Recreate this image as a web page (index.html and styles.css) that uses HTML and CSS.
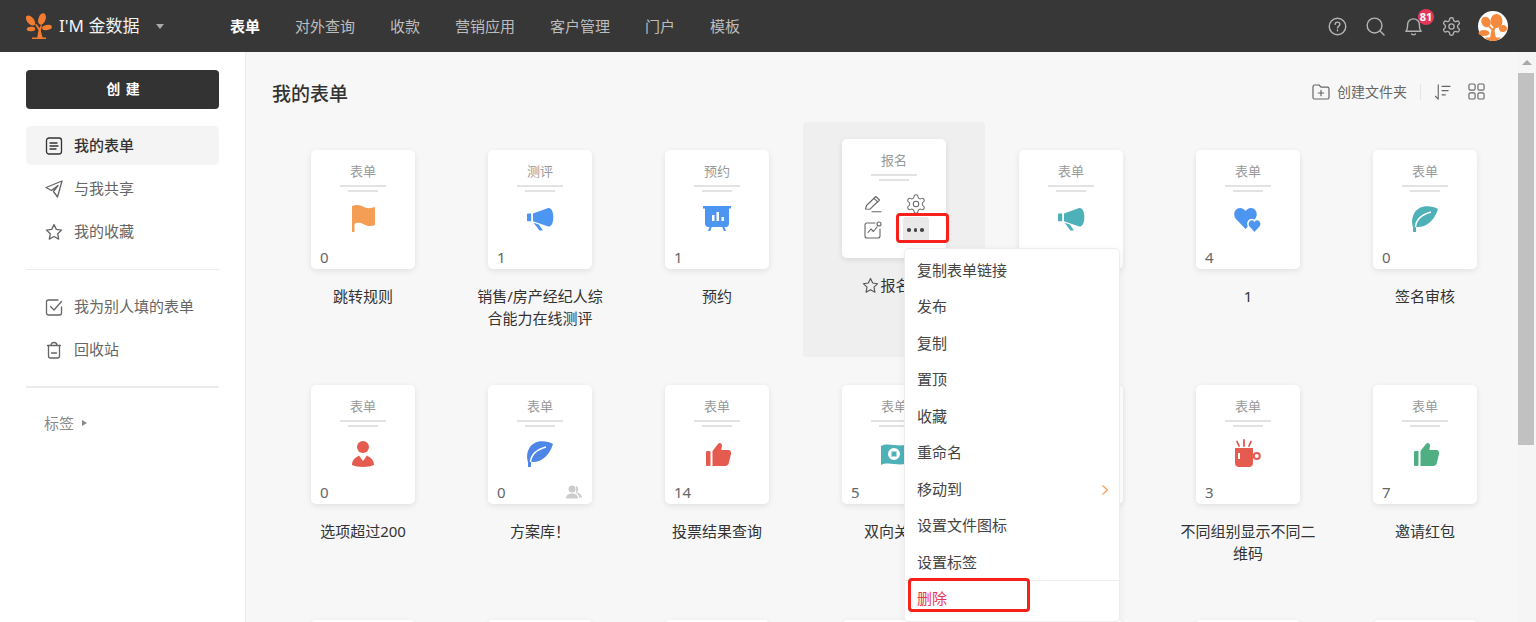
FILE: index.html
```html
<!DOCTYPE html>
<html lang="zh-CN">
<head>
<meta charset="utf-8">
<title>我的表单 - 金数据</title>
<link rel="stylesheet" href="styles.css">
</head>
<body>
<svg class="sprite" aria-hidden="true">
  <symbol id="i-flag" viewBox="0 0 28 28"><path d="M3 2C8 0 11 1 15 3S22 4 26 3V21C21 23 18 22 14 20S7 19 5.5 20V28H3Z"/></symbol>
  <symbol id="i-horn" viewBox="0 0 28 28"><path d="M7 9.5 21.500 4.200C25 3 27.300 7 27.300 13.200S25 23.500 21.500 22.300L7 17.200Z"/><path d="M2 9.500H5.200V17.200H2C1.400 17.200 1 16.800 1 16.200V10.500C1 9.900 1.400 9.500 2 9.500Z"/><path d="M7.500 18.800 12.800 20.500 17 26.500H13.500Z"/></symbol>
  <symbol id="i-board" viewBox="0 0 28 28"><path fill-rule="evenodd" d="M0 2H28V4.500H26V19C26 21.500 25 23 23 23H21.500L23 27H20.800L19.300 23H8.700L7.200 27H5L6.500 23H5C3 23 2 21.500 2 19V4.500H0ZM9 11V17H11.500V11ZM13.500 8V17H16V8ZM18.500 13V17H21V13Z"/></symbol>
  <symbol id="i-heart" viewBox="0 0 28 28"><path d="M11.500 25 2 15C-1.500 11 .5 4 6 4 8.500 4 10.500 5.500 11.500 7 12.500 5.500 14.500 4 17 4 22.500 4 24.500 11 21 15Z"/><path class="knock" d="M20.500 29 15 23C12.500 20 14.500 15.500 18 15.500 19 15.500 20 16 20.500 16.800 21 16 22 15.500 23 15.500 26.500 15.500 28.500 20 26 23Z"/></symbol>
  <symbol id="i-leaf" viewBox="0 0 28 28"><path d="M27 5C20 1 9 1 4 8 0 14 1 20 2 23V28H5V23C14 24 23 18 27 5Z"/><path class="vein" d="M4.500 23C5 16 11 10.500 20 8"/></symbol>
  <symbol id="i-person" viewBox="0 0 28 28"><circle cx="14" cy="8" r="6"/><path d="M3 26C3 21 6 19 10 16.500L14 22 18 16.500C22 19 25 21 25 26 20 28.500 8 28.500 3 26Z"/></symbol>
  <symbol id="i-thumb" viewBox="0 0 28 28"><rect x="3" y="12" width="4.500" height="15" rx="1.200"/><path d="M9.500 12 15 5C16.300 3 19.300 4 19 7L18.300 11H25.500C27.500 11 28.500 13 28 15L25.700 24.500C25.200 26 24 27 22.300 27H9.500Z"/></symbol>
  <symbol id="i-money" viewBox="0 0 28 28"><path fill-rule="evenodd" d="M1 7C8 3 20 9 27 5V24C20 28 8 22 1 26ZM14 9A6 6 0 1 0 14 21 6 6 0 0 0 14 9ZM11.500 12.500H16.500V17.500H11.500Z"/></symbol>
  <symbol id="i-cup" viewBox="0 0 28 28"><path fill-rule="evenodd" d="M1 9H19V24C19 26.500 17.500 28 15 28H5C2.500 28 1 26.500 1 24ZM4 14V20H6V14Z"/><circle class="ring" cx="22.800" cy="17" r="3"/><path class="steam" d="M3 2.500 5 7M10 1V7M17 2.500 15 7"/></symbol>
  <symbol id="i-people" viewBox="0 0 16 14"><circle cx="6" cy="4" r="3.500"/><path d="M0 13.500C0 10 2.500 8.500 6 8.500S12 10 12 13.500Z"/><path d="M9.500.8A3.500 3.500 0 0 1 10.500 7.300C13.500 8 16 10 16 12.500H13C13 10 11.500 8.500 9.500 7.800 10.500 5.500 10.500 3 9.500.8Z"/></symbol>
  <symbol id="i-gear" viewBox="0 0 24 24"><path d="M12.220 2h-.44a2 2 0 0 0-2 2v.18a2 2 0 0 1-1 1.730l-.43.250a2 2 0 0 1-2 0l-.15-.08a2 2 0 0 0-2.730.730l-.22.380a2 2 0 0 0 .730 2.730l.15.100a2 2 0 0 1 1 1.720v.510a2 2 0 0 1-1 1.740l-.15.090a2 2 0 0 0-.730 2.730l.22.380a2 2 0 0 0 2.730.730l.15-.08a2 2 0 0 1 2 0l.43.250a2 2 0 0 1 1 1.730V20a2 2 0 0 0 2 2h.44a2 2 0 0 0 2-2v-.18a2 2 0 0 1 1-1.730l.43-.25a2 2 0 0 1 2 0l.15.080a2 2 0 0 0 2.730-.730l.22-.390a2 2 0 0 0-.730-2.730l-.15-.08a2 2 0 0 1-1-1.740v-.5a2 2 0 0 1 1-1.740l.15-.09a2 2 0 0 0 .730-2.730l-.22-.38a2 2 0 0 0-2.730-.730l-.15.080a2 2 0 0 1-2 0l-.43-.25a2 2 0 0 1-1-1.730V4a2 2 0 0 0-2-2z"/><circle cx="12" cy="12" r="3"/></symbol>
  <symbol id="i-star" viewBox="0 0 18 18"><path d="M9 1.500 11.300 6.400 16.600 7.100 12.700 10.800 13.700 16.100 9 13.500 4.300 16.100 5.300 10.800 1.400 7.100 6.700 6.400Z"/></symbol>
</svg>

<header class="topbar">
  <div class="brand">
    <svg class="brand-logo" viewBox="0 0 26 26">
      <ellipse cx="4.500" cy="7.500" rx="3.400" ry="6" transform="rotate(-40 4.500 7.500)"/>
      <ellipse cx="16" cy="6" rx="3.600" ry="6" transform="rotate(18 16 6)"/>
      <ellipse cx="5" cy="16" rx="4.300" ry="2.300" transform="rotate(-5 5 16)"/>
      <ellipse cx="21" cy="14.500" rx="5" ry="2.500" transform="rotate(-12 21 14.500)"/>
      <path d="M11 26 12.500 17 9 11.500 10.500 11 13.500 15 15 12 16 12.500 14.800 18 17 26Z"/>
      <path d="M6 24.500H20V26H6Z"/>
    </svg>
    <span class="brand-name">I'M 金数据</span>
    <span class="brand-caret"></span>
  </div>
  <nav class="nav">
    <a class="nav-link is-active">表单</a>
    <a class="nav-link">对外查询</a>
    <a class="nav-link">收款</a>
    <a class="nav-link">营销应用</a>
    <a class="nav-link">客户管理</a>
    <a class="nav-link">门户</a>
    <a class="nav-link">模板</a>
  </nav>
  <div class="top-tools">
    <span class="tool"><svg class="tool-icon" viewBox="0 0 20 20"><circle cx="10" cy="10" r="8.700"/><path d="M7.500 7.800C7.500 6.300 8.700 5.400 10 5.400S12.500 6.300 12.500 7.700C12.500 9.500 10 9.600 10 11.500"/><path d="M10 13.700V14.600"/></svg></span>
    <span class="tool"><svg class="tool-icon" viewBox="0 0 20 20"><circle cx="9" cy="9" r="7.800"/><path d="M14.800 14.800 19 19"/></svg></span>
    <span class="tool tool-bell"><svg class="tool-icon" viewBox="0 0 20 20"><path d="M2 15C3.500 13.500 3.800 12 3.800 9V7.800C3.800 4.500 6.500 2 10 2S16.200 4.500 16.200 7.800V9C16.200 12 16.500 13.500 18 15Z"/><path d="M8 17.800C9 18.800 11 18.800 12 17.800"/></svg><span class="badge">81</span></span>
    <span class="tool"><svg class="tool-icon tool-gear"><use href="#i-gear"/></svg></span>
    <svg class="avatar" viewBox="0 0 30 30">
      <circle class="avatar-bg" cx="15" cy="15" r="15"/>
      <ellipse cx="8" cy="11" rx="4.500" ry="5.500" transform="rotate(-30 8 11)"/>
      <ellipse cx="18.500" cy="10" rx="6" ry="7"/>
      <ellipse cx="6" cy="22" rx="5.500" ry="3"/>
      <ellipse cx="25" cy="17.500" rx="4" ry="3.500" transform="rotate(-15 25 17.500)"/>
      <path d="M12 27 13.500 19 10 15.500 11.500 14.500 14.500 17.500 17 15 18 16 16.500 20 18 27Z"/>
      <path d="M7 26.500H23C21 29 18 30 15 30S9 29 7 26.500Z"/>
    </svg>
  </div>
</header>

<div class="layout">
  <aside class="sidebar">
    <button class="create-btn">创 建</button>
    <ul class="side-list">
      <li class="side-item is-active"><svg class="side-icon" viewBox="0 0 18 18"><rect x="1.500" y="1" width="15" height="16" rx="2.500"/><path d="M5 6H12M5 9H13M5 12H11"/></svg>我的表单</li>
      <li class="side-item"><svg class="side-icon" viewBox="0 0 18 18"><path d="M17 1 1 7.500 6.500 10.500 13 5.500 8.500 11.500 12.500 17Z"/></svg>与我共享</li>
      <li class="side-item"><svg class="side-icon" viewBox="0 0 18 18"><use href="#i-star"/></svg>我的收藏</li>
    </ul>
    <hr class="side-rule">
    <ul class="side-list">
      <li class="side-item"><svg class="side-icon" viewBox="0 0 18 18"><path d="M16.500 9V15C16.500 16 15.800 17 14.500 17H3.500C2.300 17 1.500 16.200 1.500 15V4C1.500 2.800 2.300 2 3.500 2H13"/><path d="M5.500 8.500 9 12 16.500 3.500"/></svg>我为别人填的表单</li>
      <li class="side-item"><svg class="side-icon" viewBox="0 0 18 18"><path d="M2.500 4.500H15.500M6 4.500C6 2.500 7 1.500 9 1.500S12 2.500 12 4.500"/><path d="M3.500 4.500V15C3.500 16.200 4.300 17 5.500 17H12.500C13.700 17 14.500 16.200 14.500 15V4.500"/><path d="M6.500 12H11.500"/></svg>回收站</li>
    </ul>
    <hr class="side-rule side-rule-thick">
    <div class="side-tags">标签<span class="tags-caret"></span></div>
  </aside>

  <main class="main">
    <div class="toolbar">
      <h1 class="page-title">我的表单</h1>
      <div class="toolbar-tools">
        <svg class="tb-icon" viewBox="0 0 18 18"><path d="M1 4C1 2.800 1.600 2 2.800 2H7L9 4.200H15.500C16.500 4.200 17 5 17 6V14.500C17 15.500 16.500 16 15.500 16H2.500C1.500 16 1 15.500 1 14.500Z"/><path d="M9 7.300V12.700M6.300 10H11.700"/></svg>
        <span class="tb-label">创建文件夹</span>
        <span class="tb-divider"></span>
        <svg class="tb-icon tb-sort" viewBox="0 0 18 18"><path d="M4.500 1.500V16.500M4.500 16.500 1.500 13.500"/><path d="M8.500 3H17M8.500 7.500H15M8.500 12H12"/></svg>
        <svg class="tb-icon tb-grid" viewBox="0 0 18 18"><rect x="1" y="1" width="6.500" height="6.500" rx="1.500"/><rect x="10.500" y="1" width="6.500" height="6.500" rx="1.500"/><rect x="1" y="10.500" width="6.500" height="6.500" rx="1.500"/><rect x="10.500" y="10.500" width="6.500" height="6.500" rx="1.500"/></svg>
      </div>
    </div>

    <div class="form-grid">
      <article class="cell"><div class="card"><div class="card-type">表单</div><i class="rule"></i><i class="rule rule-short"></i><svg class="card-icon c-orange"><use href="#i-flag"/></svg><div class="card-foot"><span class="count">0</span></div></div><div class="cell-title">跳转规则</div></article>
      <article class="cell"><div class="card"><div class="card-type">测评</div><i class="rule"></i><i class="rule rule-short"></i><svg class="card-icon c-blue"><use href="#i-horn"/></svg><div class="card-foot"><span class="count">1</span></div></div><div class="cell-title">销售/房产经纪人综合能力在线测评</div></article>
      <article class="cell"><div class="card"><div class="card-type">预约</div><i class="rule"></i><i class="rule rule-short"></i><svg class="card-icon c-blue"><use href="#i-board"/></svg><div class="card-foot"><span class="count">1</span></div></div><div class="cell-title">预约</div></article>
      <article class="cell is-hover">
        <div class="card">
          <div class="card-type">报名</div><i class="rule"></i><i class="rule rule-short"></i>
          <div class="card-actions">
            <span class="action"><svg class="action-icon" viewBox="0 0 18 18"><path d="M1.500 14 2.500 10.500 11.800 1.500 15.500 5 6 14.200Z"/><path d="M10 3.300 13.700 6.900M8 16.800H17"/></svg></span>
            <span class="action"><svg class="action-icon action-gear"><use href="#i-gear"/></svg></span>
            <span class="action"><svg class="action-icon" viewBox="0 0 18 18"><path d="M11 2H3C1.800 2 1 2.800 1 4V15C1 16.200 1.800 17 3 17H14C15.200 17 16 16.200 16 15V8"/><path d="M4 11.500 7 8 9.500 10.500 13 6"/><circle cx="15" cy="3" r="2"/></svg></span>
            <span class="action action-more"><i></i><i></i><i></i></span>
          </div>
        </div>
        <div class="cell-title"><svg class="title-star" viewBox="0 0 18 18"><use href="#i-star"/></svg>报名表</div>
      </article>
      <article class="cell"><div class="card"><div class="card-type">表单</div><i class="rule"></i><i class="rule rule-short"></i><svg class="card-icon c-teal"><use href="#i-horn"/></svg><div class="card-foot"><span class="count">2</span></div></div><div class="cell-title">活动</div></article>
      <article class="cell"><div class="card"><div class="card-type">表单</div><i class="rule"></i><i class="rule rule-short"></i><svg class="card-icon c-blue"><use href="#i-heart"/></svg><div class="card-foot"><span class="count">4</span></div></div><div class="cell-title">1</div></article>
      <article class="cell"><div class="card"><div class="card-type">表单</div><i class="rule"></i><i class="rule rule-short"></i><svg class="card-icon c-teal"><use href="#i-leaf"/></svg><div class="card-foot"><span class="count">0</span></div></div><div class="cell-title">签名审核</div></article>

      <article class="cell"><div class="card"><div class="card-type">表单</div><i class="rule"></i><i class="rule rule-short"></i><svg class="card-icon c-red"><use href="#i-person"/></svg><div class="card-foot"><span class="count">0</span></div></div><div class="cell-title">选项超过200</div></article>
      <article class="cell"><div class="card"><div class="card-type">表单</div><i class="rule"></i><i class="rule rule-short"></i><svg class="card-icon c-indigo"><use href="#i-leaf"/></svg><div class="card-foot"><span class="count">0</span><svg class="share-icon"><use href="#i-people"/></svg></div></div><div class="cell-title">方案库！</div></article>
      <article class="cell"><div class="card"><div class="card-type">表单</div><i class="rule"></i><i class="rule rule-short"></i><svg class="card-icon c-red"><use href="#i-thumb"/></svg><div class="card-foot"><span class="count">14</span></div></div><div class="cell-title">投票结果查询</div></article>
      <article class="cell"><div class="card"><div class="card-type">表单</div><i class="rule"></i><i class="rule rule-short"></i><svg class="card-icon c-teal"><use href="#i-money"/></svg><div class="card-foot"><span class="count">5</span></div></div><div class="cell-title">双向关联</div></article>
      <article class="cell"><div class="card"><div class="card-type">表单</div><i class="rule"></i><i class="rule rule-short"></i><svg class="card-icon c-blue"><use href="#i-flag"/></svg><div class="card-foot"><span class="count">0</span></div></div><div class="cell-title">问卷</div></article>
      <article class="cell"><div class="card"><div class="card-type">表单</div><i class="rule"></i><i class="rule rule-short"></i><svg class="card-icon c-red"><use href="#i-cup"/></svg><div class="card-foot"><span class="count">3</span></div></div><div class="cell-title">不同组别显示不同二维码</div></article>
      <article class="cell"><div class="card"><div class="card-type">表单</div><i class="rule"></i><i class="rule rule-short"></i><svg class="card-icon c-green"><use href="#i-thumb"/></svg><div class="card-foot"><span class="count">7</span></div></div><div class="cell-title">邀请红包</div></article>

      <article class="cell"><div class="card"></div></article>
      <article class="cell"><div class="card"></div></article>
      <article class="cell"><div class="card"></div></article>
      <article class="cell"><div class="card"></div></article>
      <article class="cell"><div class="card"></div></article>
      <article class="cell"><div class="card"></div></article>
      <article class="cell"><div class="card"></div></article>
    </div>
  </main>

  <div class="scrollbar">
    <span class="scroll-up"></span>
    <span class="scroll-thumb"></span>
  </div>
</div>

<ul class="context-menu">
  <li class="menu-item">复制表单链接</li>
  <li class="menu-item">发布</li>
  <li class="menu-item">复制</li>
  <li class="menu-item">置顶</li>
  <li class="menu-item">收藏</li>
  <li class="menu-item">重命名</li>
  <li class="menu-item menu-sub">移动到<svg class="menu-chevron" viewBox="0 0 8 12"><path d="M1.500 1.500 6.500 6 1.500 10.500"/></svg></li>
  <li class="menu-item">设置文件图标</li>
  <li class="menu-item">设置标签</li>
  <li class="menu-item menu-danger">删除</li>
</ul>
<div class="mark mark-more"></div>
<div class="mark mark-delete"></div>
</body>
</html>
```

FILE: styles.css
```css
* { box-sizing: border-box; }
html, body { margin: 0; height: 622px; overflow: hidden; }
body {
  position: relative;
  font-family: "Noto Sans", "Noto Sans CJK SC", sans-serif;
  font-size: 15px;
  color: #333;
  background: #f7f7f7;
}
ul { margin: 0; padding: 0; list-style: none; }
.sprite { position: absolute; width: 0; height: 0; }

/* top bar */
.topbar {
  height: 52px;
  background: #373737;
  display: flex;
  align-items: center;
  padding-left: 26px;
}
.brand { width: 204px; display: flex; align-items: center; }
.brand-logo { width: 26px; height: 26px; fill: #f47c30; flex: none; }
.brand-name { margin-left: 7px; font-size: 17px; line-height: 24px; color: #f2f2f2; white-space: nowrap; }
.brand-caret {
  margin-left: 17px;
  width: 0; height: 0;
  border-left: 4.500px solid transparent;
  border-right: 4.500px solid transparent;
  border-top: 5px solid #aaa;
}
.nav { display: flex; gap: 35px; }
.nav-link { font-size: 15px; line-height: 22px; color: #bdbdbd; white-space: nowrap; }
.nav-link.is-active { color: #fff; font-weight: 700; }
.top-tools { margin-left: auto; margin-right: 28px; display: flex; align-items: center; }
.tool { position: relative; width: 38px; height: 30px; display: flex; align-items: center; justify-content: center; }
.tool-icon { width: 19px; height: 19px; fill: none; stroke: #b4b4b4; stroke-width: 1.500; stroke-linecap: round; stroke-linejoin: round; }
.tool-gear { width: 21px; height: 21px; }
.badge {
  position: absolute; left: 24px; top: -2px;
  width: 16px; height: 16px; border-radius: 50%;
  background: #e6375a; color: #fff;
  font-size: 11px; line-height: 16px; font-weight: 700; text-align: center;
}
.avatar { width: 30px; height: 30px; margin-left: 8px; fill: #f58a3c; }
.avatar-bg { fill: #fff; }

/* layout */
.layout { display: flex; height: 570px; }

/* sidebar */
.sidebar {
  width: 246px; flex: none;
  background: #fff;
  border-right: 1px solid #ececec;
  padding: 18px 26px 0;
}
.create-btn {
  display: block; width: 193px; height: 39px;
  margin: 0 0 17px; padding: 0 0 2px 2px;
  border: 0; border-radius: 4px;
  background: #333; color: #fff;
  font: 700 14px/37px "Noto Sans", "Noto Sans CJK SC", sans-serif;
  letter-spacing: 1px;
}
.side-list { display: flex; flex-direction: column; gap: 4px; }
.side-item {
  width: 193px; height: 39px;
  display: flex; align-items: center;
  padding: 0 0 2px 19px;
  border-radius: 5px;
  font-size: 15px; color: #666;
  white-space: nowrap;
}
.side-item.is-active { background: #f4f4f4; color: #333; font-weight: 500; }
.side-icon { width: 18px; height: 18px; margin: 2px 11px 0 0; flex: none; fill: none; stroke: #666; stroke-width: 1.300; stroke-linejoin: round; stroke-linecap: round; }
.is-active .side-icon { stroke: #333; }
.side-rule { margin: 18px 0 17px; border: 0; border-top: 1px solid #ececec; width: 193px; }
.side-rule-thick { border-top-width: 2px; margin: 17px 0 24px; }
.side-tags { padding-left: 18px; font-size: 15px; line-height: 22px; color: #8a8a8a; display: flex; align-items: center; }
.tags-caret {
  margin-left: 8px; width: 0; height: 0;
  border-top: 3.500px solid transparent;
  border-bottom: 3.500px solid transparent;
  border-left: 5px solid #888;
}

/* main */
.main { flex: 1; min-width: 0; padding-left: 28px; overflow: hidden; background: #f7f7f7; }
.toolbar { height: 70px; padding: 11px 33px 0 0; display: flex; align-items: center; justify-content: space-between; }
.page-title { margin: 2px 0 0 -2px; font-size: 19px; line-height: 28px; font-weight: 500; color: #333; }
.toolbar-tools { display: flex; align-items: center; margin-bottom: 2px; }
.tb-icon { width: 18px; height: 18px; fill: none; stroke: #666; stroke-width: 1.200; stroke-linecap: round; stroke-linejoin: round; }
.tb-label { margin-left: 7px; font-size: 14px; line-height: 20px; color: #666; }
.tb-divider { width: 1px; height: 16px; margin: 0 13px 0 13px; background: #e4e4e4; }
.tb-sort { width: 17px; }
.tb-grid { margin-left: 17px; width: 17px; height: 17px; }

.form-grid { display: grid; grid-template-columns: repeat(7, 177px); grid-auto-rows: 235px; margin-left: .500px; }
.cell { display: flex; flex-direction: column; align-items: center; padding-top: 28px; }
.card {
  width: 104px; height: 119px; flex: none;
  display: flex; flex-direction: column; align-items: center;
  padding-top: 12px;
  background: #fff; border-radius: 5px;
  box-shadow: 0 2px 6px rgba(0, 0, 0, .09);
}
.card-type { font-size: 13px; line-height: 18px; color: #999; }
.rule { display: block; width: 46px; height: 2px; margin-top: 5px; background: #e2e2e2; flex: none; }
.rule-short { width: 30px; margin-top: 3px; }
.card-icon { width: 28px; height: 28px; margin-top: 12px; flex: none; }
.card-foot { margin-top: auto; width: 100%; height: 21px; padding: 0 10px 3px 9px; display: flex; align-items: center; justify-content: space-between; }
.count { font-size: 15px; line-height: 18px; color: #666; }
.share-icon { width: 16px; height: 14px; fill: #ccc; }
.c-orange { fill: #f49d55; }
.c-blue { fill: #4c96f2; }
.c-teal { fill: #4fb1b8; }
.c-red { fill: #e55b50; }
.c-green { fill: #4faf82; }
.c-indigo { fill: #4d86e6; }
.vein { fill: none; stroke: #fff; stroke-width: 1.500; }
.knock { stroke: #fff; stroke-width: 1.500; }
.ring { fill: none; stroke: #e55b50; stroke-width: 2; }
.steam { fill: none; stroke: #e55b50; stroke-width: 1.800; stroke-linecap: round; }
.cell-title {
  width: 140px; margin-top: 16px;
  font-size: 15px; line-height: 22px; color: #333;
  text-align: center;
}
.is-hover { margin: 0 -2.500px; padding-top: 17px; background: #efefef; border-radius: 4px; }
.is-hover .cell-title { display: flex; justify-content: center; align-items: center; white-space: nowrap; }
.title-star { width: 17px; height: 17px; margin-right: 1px; fill: none; stroke: #555; stroke-width: 1.200; stroke-linejoin: round; }

.card-actions { display: grid; grid-template-columns: 26px 26px; grid-auto-rows: 26px; column-gap: 17px; margin-top: 10px; }
.action { display: flex; align-items: center; justify-content: center; }
.action-icon { width: 18px; height: 18px; fill: none; stroke: #666; stroke-width: 1.100; stroke-linejoin: round; stroke-linecap: round; }
.action-gear { width: 22px; height: 22px; }
.action-more { gap: 3px; background: #e9e9e9; border-radius: 3px 3px 0 0; }
.action-more i { width: 3.500px; height: 3.500px; border-radius: 50%; background: #444; }

/* scrollbar */
.scrollbar { width: 18px; flex: none; background: #f5f5f5; display: flex; flex-direction: column; }
.scroll-up {
  margin: 8px 0 0 4px; width: 0; height: 0;
  border-left: 5px solid transparent;
  border-right: 5px solid transparent;
  border-bottom: 5px solid #a8a8a8;
}
.scroll-thumb { width: 16px; height: 372px; margin-top: 8px; background: #c1c1c1; }

/* overlays */
.context-menu {
  position: absolute; left: 904px; top: 248px;
  width: 216px; height: 374px;
  padding-top: 2px;
  background: #fff;
  border: 1px solid #eee; border-radius: 5px;
  box-shadow: 0 2px 8px rgba(0, 0, 0, .06);
}
.menu-item {
  height: 36.500px; padding-left: 12px;
  display: flex; align-items: center;
  font-size: 15px; color: #444;
}
.menu-sub { justify-content: space-between; padding-right: 10px; }
.menu-chevron { width: 8px; height: 12px; margin-top: 4px; fill: none; stroke: #f49d55; stroke-width: 1.200; }
.menu-danger { color: #e8384f; border-top: 1px solid #eee; padding-bottom: 1px; }
.mark { position: absolute; border: 3px solid #f7201b; border-radius: 4px; }
.mark-more { left: 896px; top: 213px; width: 53px; height: 30px; }
.mark-delete { left: 908px; top: 578px; width: 122px; height: 34px; }
```
